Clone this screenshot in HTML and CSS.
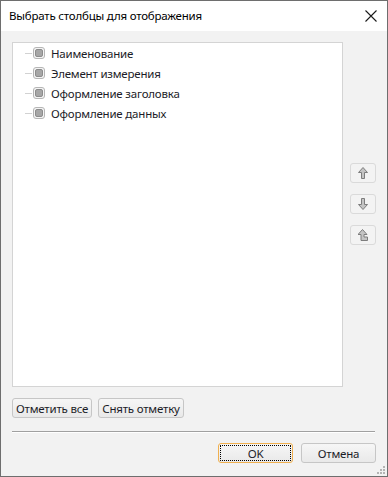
FILE: index.html
```html
<!DOCTYPE html>
<html lang="ru">
<head>
    <meta charset="UTF-8">
    <title>Выбрать столбцы для отображения</title>
    <link rel="stylesheet" href="styles.css">
</head>
<body>
    <div class="dialog">
        <div class="title-bar">
            <span class="title">Выбрать столбцы для отображения</span>
            <svg class="close" width="12" height="12" viewBox="0 0 12 12">
                <path d="M0.5 0.5 L11.5 11.5 M11.5 0.5 L0.5 11.5" stroke="#1a1a1a" stroke-width="1.1" fill="none"/>
            </svg>
        </div>

        <div class="content">
            <div class="main-row">
                <div class="tree">
                    <div class="tree-item"><span class="connector"></span><span class="check"><span class="mark"></span></span><span class="label">Наименование</span></div>
                    <div class="tree-item"><span class="connector"></span><span class="check"><span class="mark"></span></span><span class="label">Элемент измерения</span></div>
                    <div class="tree-item"><span class="connector"></span><span class="check"><span class="mark"></span></span><span class="label">Оформление заголовка</span></div>
                    <div class="tree-item"><span class="connector"></span><span class="check"><span class="mark"></span></span><span class="label">Оформление данных</span></div>
                </div>

                <div class="move-buttons">
                    <button class="icon-btn" type="button">
                        <svg width="10" height="12" viewBox="0 0 10 12">
                            <path d="M5 0.5 L9.5 5.5 L6.5 5.5 L6.5 11.5 L3.5 11.5 L3.5 5.5 L0.5 5.5 Z" fill="#c4c4c4" stroke="#7d7d7d" stroke-width="1" stroke-linejoin="round"/>
                        </svg>
                    </button>
                    <button class="icon-btn" type="button">
                        <svg width="10" height="12" viewBox="0 0 10 12">
                            <path d="M5 11.5 L9.5 6.5 L6.5 6.5 L6.5 0.5 L3.5 0.5 L3.5 6.5 L0.5 6.5 Z" fill="#c4c4c4" stroke="#7d7d7d" stroke-width="1" stroke-linejoin="round"/>
                        </svg>
                    </button>
                    <button class="icon-btn" type="button">
                        <svg width="10" height="12" viewBox="0 0 10 12">
                            <path d="M4.5 0.5 L9 5.5 L6 5.5 L6 8 L9.5 8 L9.5 11.5 L3 11.5 L3 5.5 L0 5.5 Z" fill="#c4c4c4" stroke="#7d7d7d" stroke-width="1" stroke-linejoin="round"/>
                        </svg>
                    </button>
                </div>
            </div>

            <div class="mark-buttons">
                <button class="btn" type="button">Отметить все</button>
                <button class="btn" type="button">Снять отметку</button>
            </div>

            <div class="separator"></div>

            <div class="footer">
                <button class="btn btn-wide btn-default" type="button">OK</button>
                <button class="btn btn-wide" type="button">Отмена</button>
            </div>
        </div>

        <svg class="grip" width="10" height="10" viewBox="0 0 10 10">
            <rect x="7" y="1" width="2" height="2" fill="#b4b4b4"/>
            <rect x="4" y="4" width="2" height="2" fill="#b4b4b4"/>
            <rect x="7" y="4" width="2" height="2" fill="#b4b4b4"/>
            <rect x="1" y="7" width="2" height="2" fill="#b4b4b4"/>
            <rect x="4" y="7" width="2" height="2" fill="#b4b4b4"/>
            <rect x="7" y="7" width="2" height="2" fill="#b4b4b4"/>
        </svg>
    </div>
</body>
</html>
```

FILE: styles.css
```css
* {
    box-sizing: border-box;
}
body {
    margin: 0;
    font-family: "Segoe UI", "Noto Sans", Arial, sans-serif;
    font-size: 11.5px;
    letter-spacing: -0.2px;
    color: #1c1c28;
}
.dialog {
    position: relative;
    width: 388px;
    height: 477px;
    border: 1px solid #6e6e6e;
    background: #f2f2f2;
    display: flex;
    flex-direction: column;
}
.title-bar {
    height: 30px;
    background: #fff;
    display: flex;
    align-items: center;
    justify-content: space-between;
    padding: 0 10px 1px 8px;
}
.title {
    font-size: 11.5px;
    color: #000;
}
.close {
    margin-top: 1px;
}
.content {
    flex: 1;
    padding: 11px 11px 0 11px;
    display: flex;
    flex-direction: column;
}
.main-row {
    display: flex;
    gap: 7px;
    height: 345px;
}
.tree {
    flex: 1;
    background: #fff;
    border: 1px solid #d4d4d4;
    padding: 0 0 0 12px;
}
.tree-item {
    height: 20px;
    display: flex;
    align-items: center;
}
.connector {
    width: 7px;
    height: 1px;
    background: #d2d2d2;
    margin-right: 1px;
}
.check {
    width: 12px;
    height: 12px;
    border: 1px solid #b6b6b6;
    border-radius: 3px;
    background: #f4f4f4;
    display: flex;
    align-items: center;
    justify-content: center;
}
.mark {
    width: 8px;
    height: 8px;
    border: 1px solid #8c8c8c;
    border-radius: 2px;
    background: #a6a6a6;
}
.label {
    margin-left: 6px;
}
.move-buttons {
    width: 26px;
    padding-top: 121px;
    display: flex;
    flex-direction: column;
    gap: 11px;
}
.icon-btn {
    width: 26px;
    height: 20px;
    padding: 0;
    border: 1px solid #dadada;
    border-radius: 3px;
    background: #f3f3f3;
    display: flex;
    align-items: center;
    justify-content: center;
}
.mark-buttons {
    display: flex;
    gap: 6px;
    margin-top: 11px;
}
.btn {
    height: 20px;
    padding: 0 3px;
    font-family: inherit;
    font-size: 11.5px;
    letter-spacing: -0.2px;
    color: #1c1c28;
    border: 1px solid #c6c6c6;
    border-radius: 3px;
    background: linear-gradient(#f6f6f6, #e9e9e9);
    position: relative;
}
.separator {
    height: 2px;
    background: #a0a0a0;
    border-bottom: 1px solid #fff;
    margin: 13px 1px 0 0;
}
.footer {
    display: flex;
    justify-content: flex-end;
    gap: 8px;
    margin-top: 10px;
}
.btn-wide {
    width: 75px;
}
.btn-default {
    border-color: #f0b050;
}
.btn-default::after {
    content: "";
    position: absolute;
    inset: 1px;
    border: 1px dotted #000;
    border-radius: 1px;
}
.grip {
    position: absolute;
    right: 1px;
    bottom: 1px;
}
```
